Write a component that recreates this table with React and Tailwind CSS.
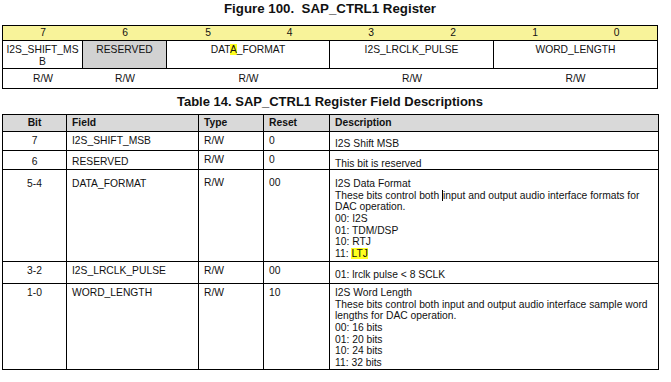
import React from "react";

const font = { fontFamily: '"Liberation Sans", Arial, sans-serif' };

function Register() {
  const bits = [
    { n: "7", w: "w-[80px]" },
    { n: "6", w: "w-[84px]" },
    { n: "5", w: "w-[82px]" },
    { n: "4", w: "w-[81px]" },
    { n: "3", w: "w-[82px]" },
    { n: "2", w: "w-[82px]" },
    { n: "1", w: "w-[82px]" },
    { n: "0", w: "w-[81px]" },
  ];
  return (
    <div className="ml-[2px] w-[656px] border border-black text-[10.3px] text-[#111]">
      <div className="flex h-[15px] border-b border-black bg-[#f8f39a] leading-[14px]">
        {bits.map((b) => (
          <div key={b.n} className={`${b.w} text-center`}>
            {b.n}
          </div>
        ))}
      </div>
      <div className="flex h-[28px] border-b border-black leading-[12px]">
        <div className="w-[80px] border-r border-black pt-[3px] text-center break-all px-[2px]">
          I2S_SHIFT_MSB
        </div>
        <div className="w-[84px] border-r border-black bg-[#d2d2d2] pt-[3px] text-center">
          RESERVED
        </div>
        <div className="w-[163px] border-r border-black pt-[3px] text-center">
          DAT<span className="bg-[#ffff20]">A</span>_FORMAT
        </div>
        <div className="w-[164px] border-r border-black pt-[3px] text-center">
          I2S_LRCLK_PULSE
        </div>
        <div className="flex-1 pt-[3px] text-center">WORD_LENGTH</div>
      </div>
      <div className="flex h-[19px] leading-[19px]">
        <div className="w-[80px] text-center">R/W</div>
        <div className="w-[84px] text-center">R/W</div>
        <div className="w-[163px] text-center">R/W</div>
        <div className="w-[164px] text-center">R/W</div>
        <div className="flex-1 text-center">R/W</div>
      </div>
    </div>
  );
}

function FieldTable() {
  const td = "border border-black align-top px-[5px] leading-[11.6px]";
  return (
    <table className="ml-[2px] w-[656px] table-fixed border-collapse text-[10.3px] text-[#111]">
      <colgroup>
        <col className="w-[64px]" />
        <col className="w-[132px]" />
        <col className="w-[65px]" />
        <col className="w-[66px]" />
        <col className="w-[329px]" />
      </colgroup>
      <thead>
        <tr className="h-[17px] bg-[#d9d9d9] font-bold">
          <th className="border border-black px-[5px] text-center align-middle">Bit</th>
          <th className="border border-black px-[5px] text-left align-middle">Field</th>
          <th className="border border-black px-[5px] text-left align-middle">Type</th>
          <th className="border border-black px-[5px] text-left align-middle">Reset</th>
          <th className="border border-black px-[5px] text-left align-middle">Description</th>
        </tr>
      </thead>
      <tbody>
        <tr className="h-[18px]">
          <td className={`${td} pt-[3px] text-center`}>7</td>
          <td className={`${td} pt-[3px]`}>I2S_SHIFT_MSB</td>
          <td className={`${td} pt-[3px]`}>R/W</td>
          <td className={`${td} pt-[3px]`}>0</td>
          <td className={`${td} pt-[6px] px-[3px]`}>I2S Shift MSB</td>
        </tr>
        <tr className="h-[19px]">
          <td className={`${td} pt-[5px] text-center`}>6</td>
          <td className={`${td} pt-[5px]`}>RESERVED</td>
          <td className={`${td} pt-[3px]`}>R/W</td>
          <td className={`${td} pt-[3px]`}>0</td>
          <td className={`${td} pt-[7px] px-[3px]`}>This bit is reserved</td>
        </tr>
        <tr className="h-[92px]">
          <td className={`${td} pt-[8px] text-center`}>5-4</td>
          <td className={`${td} pt-[8px]`}>DATA_FORMAT</td>
          <td className={`${td} pt-[7px]`}>R/W</td>
          <td className={`${td} pt-[7px]`}>00</td>
          <td className={`${td} pt-[8px] px-[3px]`}>
            <div>I2S Data Format</div>
            <div>
              These bits control both{" "}
              <span className="inline-block h-[11px] w-px bg-black align-[-2px]" />
              input and output audio interface formats for DAC operation.
            </div>
            <div>00: I2S</div>
            <div>01: TDM/DSP</div>
            <div>10: RTJ</div>
            <div>
              11: <span className="bg-[#ffff20]">LTJ</span>
            </div>
          </td>
        </tr>
        <tr className="h-[22px]">
          <td className={`${td} pt-[3px] text-center`}>3-2</td>
          <td className={`${td} pt-[3px]`}>I2S_LRCLK_PULSE</td>
          <td className={`${td} pt-[3px]`}>R/W</td>
          <td className={`${td} pt-[3px]`}>00</td>
          <td className={`${td} pt-[7px] px-[3px]`}>01: lrclk pulse &lt; 8 SCLK</td>
        </tr>
        <tr className="h-[86px]">
          <td className={`${td} pt-[3px] text-center`}>1-0</td>
          <td className={`${td} pt-[3px]`}>WORD_LENGTH</td>
          <td className={`${td} pt-[3px]`}>R/W</td>
          <td className={`${td} pt-[3px]`}>10</td>
          <td className={`${td} pt-[3px] px-[3px]`}>
            <div>I2S Word Length</div>
            <div>
              These bits control both input and output audio interface sample word lengths for DAC operation.
            </div>
            <div>00: 16 bits</div>
            <div>01: 20 bits</div>
            <div>10: 24 bits</div>
            <div>11: 32 bits</div>
          </td>
        </tr>
      </tbody>
    </table>
  );
}

export default function App() {
  return (
    <div className="h-[382px] w-[671px] bg-white" style={font}>
      <div className="flex h-[25px] w-[660px] items-start justify-center pt-[1px]">
        <h1 className="text-[13.3px] font-bold leading-[16px] text-[#111] whitespace-pre">
          Figure 100.  SAP_CTRL1 Register
        </h1>
      </div>
      <Register />
      <div className="flex h-[25px] w-[660px] items-center justify-center pt-[1px]">
        <h2 className="text-[13px] font-bold leading-[16px] text-[#111]">
          Table 14. SAP_CTRL1 Register Field Descriptions
        </h2>
      </div>
      <FieldTable />
    </div>
  );
}
